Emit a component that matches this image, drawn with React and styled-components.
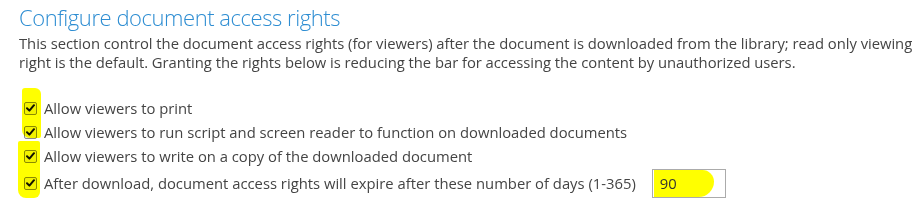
import React from 'react'
import styled, { createGlobalStyle } from 'styled-components'

const GlobalStyle = createGlobalStyle`
  body {
    margin: 0;
    background: #ffffff;
    font-family: "Open Sans", "Noto Sans", sans-serif;
    color: #444444;
  }
`

const options = [
  { id: 'print', label: 'Allow viewers to print' },
  { id: 'script', label: 'Allow viewers to run script and screen reader to function on downloaded documents' },
  { id: 'write', label: 'Allow viewers to write on a copy of the downloaded document' },
]

export default function App() {
  return (
    <>
      <GlobalStyle />
      <Section>
        <Title>Configure document access rights</Title>
        <Description>
          This section control the document access rights (for viewers) after the document is downloaded from the library; read only viewing
          <br />
          right is the default. Granting the rights below is reducing the bar for accessing the content by unauthorized users.
        </Description>
        <OptionList>
          {options.map((o) => (
            <Option key={o.id}>
              <CheckBox />
              <Label>{o.label}</Label>
            </Option>
          ))}
          <Option tall>
            <CheckBox />
            <Label>After download, document access rights will expire after these number of days (1-365)</Label>
            <DaysInput>
              <Marker />
              <DaysValue>90</DaysValue>
            </DaysInput>
          </Option>
        </OptionList>
        <HighlightTop />
        <HighlightBottom />
      </Section>
    </>
  )
}

const CheckBox = () => (
  <Box>
    <svg width="9" height="8" viewBox="0 0 9 8">
      <path d="M1 4.2 L3.4 6.6 L8 1.2" fill="none" stroke="#111" strokeWidth="2" strokeLinecap="round" strokeLinejoin="round" />
    </svg>
  </Box>
)

const Section = styled.div`
  position: relative;
  width: 924px;
  height: 211px;
  padding: 2px 0 0 19px;
  box-sizing: border-box;
  overflow: hidden;
`

const Title = styled.h1`
  margin: 0;
  font-family: "Open Sans", sans-serif;
  font-weight: 300;
  font-size: 22px;
  letter-spacing: -0.45px;
  line-height: 30px;
  color: #2d8dd2;
`

const Description = styled.p`
  margin: 2px 0 0 0;
  font-size: 14.8px;
  line-height: 19px;
  letter-spacing: -0.03px;
  white-space: nowrap;
  color: #444444;
`

const OptionList = styled.div`
  margin-top: 24px;
  padding-left: 5px;
  display: flex;
  flex-direction: column;
`

const Option = styled.div`
  display: flex;
  align-items: center;
  gap: 7px;
  height: ${(p) => (p.tall ? '28px' : '24px')};
  margin-top: ${(p) => (p.tall ? '1px' : '0')};
`

const Box = styled.span`
  width: 11px;
  height: 11px;
  border: 1px solid #8a8a8a;
  border-radius: 2px;
  background: #f2f2f2;
  display: flex;
  align-items: center;
  justify-content: center;
  flex-shrink: 0;
`

const Label = styled.span`
  font-size: 14.8px;
  color: #444444;
  white-space: nowrap;
`

const DaysInput = styled.div`
  position: relative;
  margin-left: 9px;
  width: 74px;
  height: 29px;
  border: 1px solid #ababab;
  display: flex;
  align-items: center;
  padding-left: 7px;
  box-sizing: border-box;
`

const Marker = styled.span`
  position: absolute;
  left: 1px;
  top: 0;
  width: 60px;
  height: 27px;
  background: #ffff00;
  border-radius: 0 12px 16px 0;
`

const DaysValue = styled.span`
  position: relative;
  font-size: 14.8px;
  color: #333333;
`

const HighlightTop = styled.span`
  position: absolute;
  left: 22px;
  top: 88px;
  width: 19px;
  height: 50px;
  background: #ffff00;
  mix-blend-mode: multiply;
  border-radius: 3px 6px 2px 8px;
`

const HighlightBottom = styled.span`
  position: absolute;
  left: 18px;
  top: 141px;
  width: 22px;
  height: 57px;
  background: #ffff00;
  mix-blend-mode: multiply;
  border-radius: 2px 2px 6px 8px;
`
